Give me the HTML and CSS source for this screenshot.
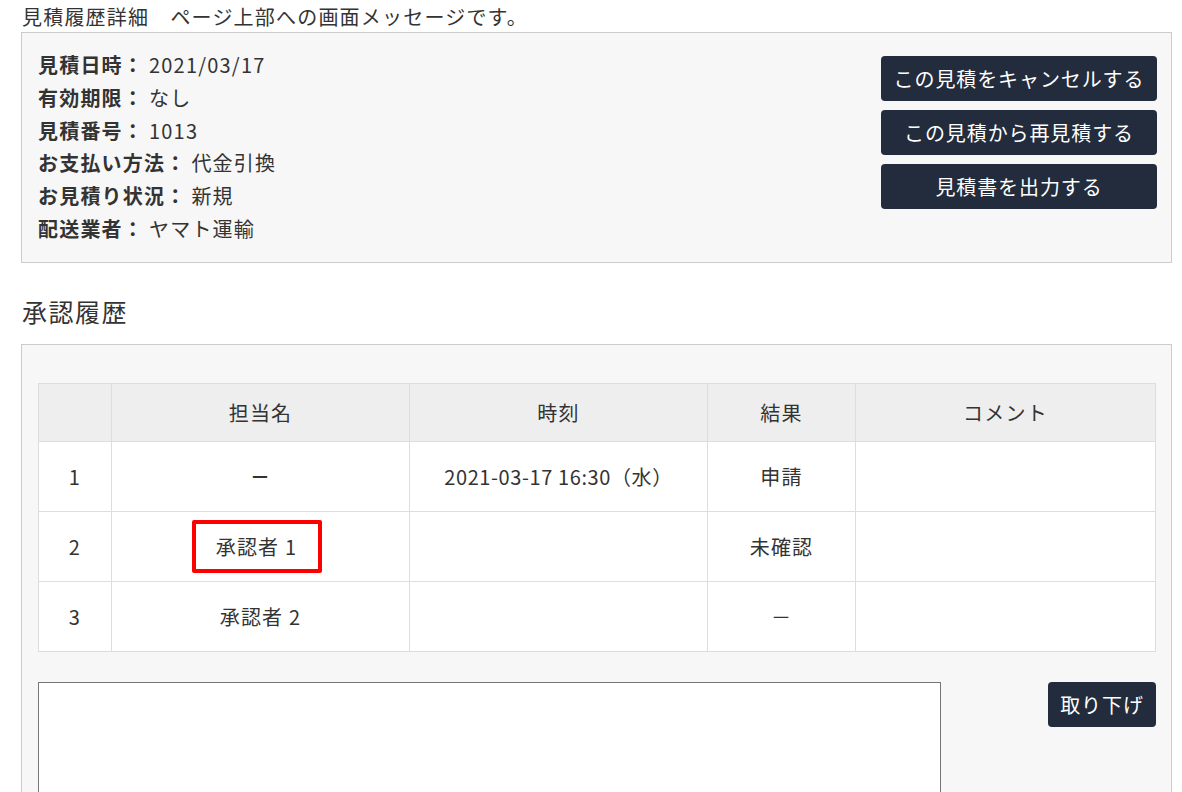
FILE: index.html
```html
<!DOCTYPE html>
<html lang="ja">
<head>
<meta charset="utf-8">
<title>見積履歴詳細</title>
<link rel="stylesheet" href="styles.css">
</head>
<body>
<div class="page">
  <div class="page-title">見積履歴詳細　ページ上部への画面メッセージです。</div>
  <div class="panel detail">
    <dl class="info">
      <div class="info-row"><dt>見積日時：</dt><dd>2021/03/17</dd></div>
      <div class="info-row"><dt>有効期限：</dt><dd>なし</dd></div>
      <div class="info-row"><dt>見積番号：</dt><dd>1013</dd></div>
      <div class="info-row"><dt>お支払い方法：</dt><dd>代金引換</dd></div>
      <div class="info-row"><dt>お見積り状況：</dt><dd>新規</dd></div>
      <div class="info-row"><dt>配送業者：</dt><dd>ヤマト運輸</dd></div>
    </dl>
    <div class="actions">
      <button class="btn btn-wide">この見積をキャンセルする</button>
      <button class="btn btn-wide">この見積から再見積する</button>
      <button class="btn btn-wide">見積書を出力する</button>
    </div>
  </div>

  <h2 class="section-title">承認履歴</h2>
  <div class="panel approval">
    <table class="history">
      <colgroup>
        <col class="c-no"><col class="c-name"><col class="c-time"><col class="c-result"><col class="c-comment">
      </colgroup>
      <thead>
        <tr><th></th><th>担当名</th><th>時刻</th><th>結果</th><th>コメント</th></tr>
      </thead>
      <tbody>
        <tr><td>1</td><td class="dash">－</td><td class="time">2021-03-17 16:30（水）</td><td>申請</td><td></td></tr>
        <tr><td>2</td><td><span class="highlight">承認者 1</span></td><td></td><td>未確認</td><td></td></tr>
        <tr><td>3</td><td>承認者 2</td><td></td><td>－</td><td></td></tr>
      </tbody>
    </table>
    <div class="comment-row">
      <textarea class="comment"></textarea>
      <button class="btn btn-small">取り下げ</button>
    </div>
  </div>
</div>
</body>
</html>
```

FILE: styles.css
```css
* { box-sizing: border-box; }
html, body { margin: 0; padding: 0; background: #fff; }
body {
  font-family: "Noto Sans CJK JP", "Noto Sans", sans-serif;
  color: #333;
  font-size: 20px;
  letter-spacing: 0.06em;
}
.page { padding: 3px 10px 0 21px; }
.page-title { line-height: 27px; padding-left: 1px; }
.panel {
  background: #f7f7f7;
  border: 1px solid #ccc;
}
.detail {
  margin-top: 2px;
  display: flex;
  justify-content: space-between;
  padding: 16px 14px 16px 16px;
}
.info { margin: 0; }
.info-row { display: flex; line-height: 32.8px; }
.info dt { font-weight: bold; margin-right: 5px; }
.info dd { margin: 0; }
.actions {
  display: flex;
  flex-direction: column;
  gap: 9px;
  padding-top: 7px;
}
.btn {
  font-family: inherit;
  letter-spacing: 0.045em;
  font-size: 20px;
  color: #fff;
  background: #222c3c;
  border: none;
  border-radius: 4px;
  cursor: pointer;
}
.btn-wide { width: 276px; height: 45px; }
.section-title {
  font-size: 25px;
  font-weight: normal;
  letter-spacing: 0.06em;
  margin: 0;
  padding-top: 32px;
  line-height: 32px;
  padding-left: 1px;
}
.approval {
  margin-top: 17px;
  padding: 38px 15px 0 16px;
  height: 460px;
}
.history {
  width: 1118px;
  border-collapse: collapse;
  background: #fff;
  text-align: center;
}
.c-no { width: 73px; }
.c-name { width: 298px; }
.c-time { width: 298px; }
.c-result { width: 148px; }
.history th, .history td {
  border: 1px solid #ddd;
  font-weight: normal;
  padding: 0;
  vertical-align: middle;
}
.history th { background: #eee; height: 58px; }
.history td { height: 70px; }
.history .dash { font-weight: bold; }
.history .time { letter-spacing: 0.03em; }
.highlight {
  display: inline-block;
  border: 4px solid #f00;
  border-radius: 2px;
  width: 130px;
  height: 53px;
  line-height: 45px;
  margin-right: 8px;
}
.comment-row {
  display: flex;
  justify-content: space-between;
  align-items: flex-start;
  margin-top: 30px;
}
.comment {
  width: 903px;
  height: 160px;
  border: 1px solid #767676;
  background: #fff;
  resize: none;
  margin: 0;
}
.btn-small { width: 108px; height: 45px; }
```
